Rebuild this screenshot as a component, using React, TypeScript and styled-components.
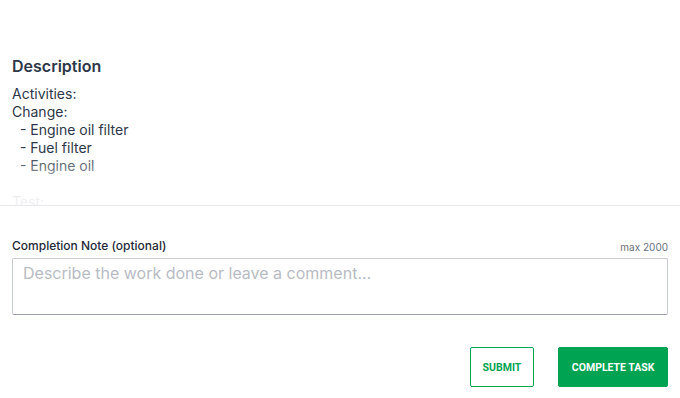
import * as React from 'react';
import styled, { createGlobalStyle } from 'styled-components';

const GlobalStyle = createGlobalStyle`
  html, body {
    margin: 0;
    padding: 0;
    background: #ffffff;
  }

  body {
    font-family: Inter, 'Noto Sans', 'Liberation Sans', sans-serif;
    color: #2d3748;
  }
`;

const Page = styled.div`
  width: 680px;
  height: 398px;
  display: flex;
  flex-direction: column;
  overflow: hidden;
`;

const DescriptionArea = styled.section`
  position: relative;
  height: 206px;
  flex-shrink: 0;
  padding: 54px 12px 0;
  box-sizing: border-box;
  overflow: hidden;
  border-bottom: 1px solid #e6e8eb;

  &:after {
    content: '';
    position: absolute;
    left: 0;
    right: 0;
    bottom: 0;
    height: 52px;
    background: linear-gradient(
      rgba(255, 255, 255, 0),
      rgba(255, 255, 255, 0.92) 85%
    );
  }
`;

const Heading = styled.h2`
  margin: 0 0 7px;
  font-size: 16px;
  line-height: 24px;
  font-weight: 600;
  color: #2d3748;
`;

const Body = styled.div`
  font-size: 14px;
  line-height: 18px;
  white-space: pre-wrap;
  color: #2d3748;
`;

const NoteForm = styled.form`
  display: flex;
  flex-direction: column;
  padding: 32px 12px 0;
`;

const LabelRow = styled.div`
  display: flex;
  justify-content: space-between;
  align-items: flex-end;
  height: 16px;
  margin-bottom: 4px;
`;

const Label = styled.label`
  font-size: 12px;
  line-height: 16px;
  font-weight: 500;
  color: #1f2937;
`;

const Counter = styled.span`
  font-size: 10px;
  line-height: 14px;
  color: #6b7280;
`;

const NoteInput = styled.textarea`
  display: block;
  box-sizing: border-box;
  width: 100%;
  height: 57px;
  margin: 0;
  padding: 4px 10px;
  resize: none;
  border: 1px solid #c8ccd3;
  border-bottom-color: #9aa1ab;
  border-radius: 2px;
  font-family: Inter, 'Noto Sans', 'Liberation Sans', sans-serif;
  font-size: 16px;
  line-height: 20px;
  color: #2d3748;
  outline: none;

  &::placeholder {
    color: #b8bcc4;
  }
`;

const Actions = styled.div`
  display: flex;
  justify-content: flex-end;
  gap: 24px;
  margin-top: 32px;
`;

const ActionButton = styled.button<{ $primary?: boolean }>`
  height: 40px;
  padding: 0 ${props => (props.$primary ? '12.5px' : '12px')};
  box-sizing: border-box;
  border: 1px solid #00a352;
  border-radius: 2px;
  background: ${props => (props.$primary ? '#00a352' : '#ffffff')};
  color: ${props => (props.$primary ? '#ffffff' : '#00a352')};
  font-family: Roboto, 'Liberation Sans', sans-serif;
  font-size: 10.5px;
  font-weight: 700;
  text-transform: uppercase;
  cursor: pointer;
`;

const description = `Activities:
Change:
  - Engine oil filter
  - Fuel filter
  - Engine oil

Test:
  - Engine run
  - Leaks`;

const App = () => {
  const [note, setNote] = React.useState('');

  return (
    <Page>
      <GlobalStyle />
      <DescriptionArea>
        <Heading>Description</Heading>
        <Body>{description}</Body>
      </DescriptionArea>
      <NoteForm onSubmit={e => e.preventDefault()}>
        <LabelRow>
          <Label htmlFor="note">Completion Note (optional)</Label>
          <Counter>max 2000</Counter>
        </LabelRow>
        <NoteInput
          id="note"
          maxLength={2000}
          placeholder="Describe the work done or leave a comment..."
          value={note}
          onChange={e => setNote(e.target.value)}
        />
        <Actions>
          <ActionButton type="submit">Submit</ActionButton>
          <ActionButton type="button" $primary>
            Complete task
          </ActionButton>
        </Actions>
      </NoteForm>
    </Page>
  );
};

export default App;
